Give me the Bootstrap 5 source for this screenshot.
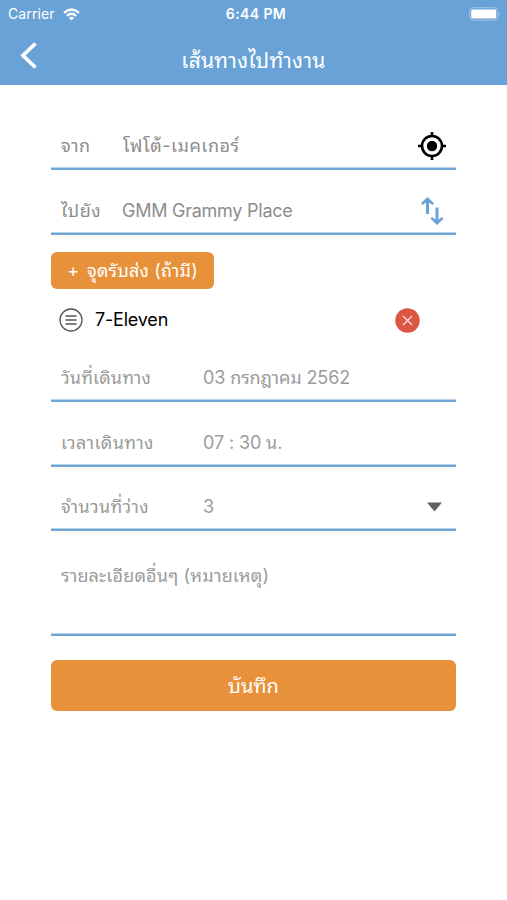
<!DOCTYPE html>
<html lang="th">
<head>
<meta charset="utf-8">
<meta name="viewport" content="width=device-width, initial-scale=1">
<title>เส้นทางไปทำงาน</title>
<link href="https://cdn.jsdelivr.net/npm/bootstrap@5.3.0/dist/css/bootstrap.min.css" rel="stylesheet">
<style>
body{font-family:Inter,"Noto Sans Thai Looped",Loma,Garuda,Umpush,Waree,"Droid Sans Thai",FreeSans,"Noto Serif Thai","Noto Sans","Liberation Sans",sans-serif;color:#000;background:#fff;font-size:18px;line-height:1}
svg{display:block;flex:none}
.app-head{background:#69a2d6;height:85px;color:#fff}
.status{height:28px;font-size:14px;padding:0 6px 0 8px}
.title-bar{height:57px;padding:0 20px 3px}
.title-bar h1{font-size:21px;line-height:1;padding-top:10px}
.form-area{width:405px;margin-left:51px;padding-top:20px}
.line-row{height:65px;border-bottom:2px solid #6fa6d6;box-shadow:inset 0 -1px #b9d3ea;padding:18px 10px 0;color:#8d8d8d}
.line-row.soft{color:#9b9b9b}
.line-row.date-row{height:51px;padding-top:4px}
.line-row.seat-row{height:64px}
.line-row.note-row{height:105px;padding-top:36px}
.w-place{width:62px}.w-label{width:142px}
.btn-orange{background:#e7913b;color:#fff;border:0;border-radius:6px}
.btn-orange:hover{background:#da842f;color:#fff}
.btn-stop{width:163px;height:37px;margin-top:17px;font-size:18px}
.stop-row{height:62px;padding:0 36px 0 8px}
.btn-save{height:51px;margin-top:24px;font-size:20px}
.t-carrier{letter-spacing:.1px}
.t-clock{letter-spacing:.4px;padding-left:3px}
.t-title{letter-spacing:.25px}
.t-seven{margin-left:12px;letter-spacing:-.2px}
.t-gmm{letter-spacing:-.25px;margin-left:-1px}
.t-from,.t-to,.t-photo{letter-spacing:.5px}
.t-dl{letter-spacing:.12px}
.t-dv,.t-tv{letter-spacing:-.12px}
.t-tl,.t-nl{letter-spacing:.35px}
.t-stop,.t-note{letter-spacing:.16px}
</style>
</head>
<body>
<header class="app-head">
  <div class="status row g-0 align-items-center">
    <div class="col d-flex align-items-center gap-2"><span class="t-carrier">Carrier</span>
      <svg width="17" height="13" viewBox="0 0 17 13" fill="none" stroke="#fff" stroke-width="2.2"><path d="M1 4.800Q8.500-1.800 16 4.800M3.800 7.800Q8.500 3.700 13.200 7.800"/><path d="M5.800 9.700Q8.500 7.700 11.200 9.700L8.500 12.500Z" fill="#fff" stroke="none"/></svg>
    </div>
    <div class="col-auto fw-semibold t-clock">6:44 PM</div>
    <div class="col d-flex justify-content-end">
      <svg width="32" height="14" viewBox="0 0 32 14"><rect x=".7" y=".7" width="28" height="12.600" rx="3.500" fill="none" stroke="#fff" stroke-opacity=".4"/><rect x="2.200" y="2.500" width="25" height="9" rx="1.500" fill="#fff"/><path d="M30 5q1.600 2 0 4z" fill="#fff" opacity=".6"/></svg>
    </div>
  </div>
  <div class="title-bar row g-0 align-items-center">
    <div class="col"><svg width="18" height="28" viewBox="0 0 18 28" fill="none" stroke="#fff" stroke-width="3.800"><path d="M15.500 2.500L3 14.500L15.500 26.500"/></svg></div>
    <h1 class="col-auto mb-0 fw-normal t-title">เส้นทางไปทำงาน</h1>
    <div class="col"></div>
  </div>
</header>
<main class="form-area">
  <div class="line-row d-flex align-items-center">
    <span class="w-place"><span class="t-from">จาก</span></span><span class="t-photo">โฟโต้-เมคเกอร์</span>
    <svg class="ms-auto" width="28" height="28" viewBox="0 0 28 28" fill="none" stroke="#000" stroke-width="2.600"><circle cx="14" cy="14" r="10"/><circle cx="14" cy="14" r="5.200" fill="#000" stroke="none"/><path d="M14 0v4M14 24v4M0 14h4M24 14h4"/></svg>
  </div>
  <div class="line-row d-flex align-items-center">
    <span class="w-place"><span class="t-to">ไปยัง</span></span><span class="t-gmm">GMM Grammy Place</span>
    <svg class="ms-auto" width="26" height="28" viewBox="0 0 26 28" fill="none" stroke="#69a2d6" stroke-width="3"><path d="M7.500 17V3M17 10.500v14"/><path d="M7.500 0L14 6.200L12.600 8L7.500 4.500L2.400 8L1 6.200ZM17 28L23.500 21.800L22.100 20L17 23.500L11.900 20L10.500 21.800Z" fill="#69a2d6" stroke="none"/></svg>
  </div>
  <button class="btn btn-orange btn-stop p-0 d-flex align-items-center justify-content-center" type="button"><span class="me-2">+</span><span class="t-stop">จุดรับส่ง (ถ้ามี)</span></button>
  <div class="stop-row d-flex align-items-center">
    <svg width="24" height="24" viewBox="0 0 24 24" fill="none" stroke="#555" stroke-width="1.300"><circle cx="12" cy="12" r="11"/><path d="M6.500 8h11M6.500 12h11M6.500 16h11"/></svg>
    <span class="t-seven">7-Eleven</span>
    <svg class="ms-auto" width="25" height="25" viewBox="0 0 25 25"><circle cx="12.500" cy="12.500" r="12.200" fill="#db5643"/><path d="M8 8l9 9M17 8l-9 9" stroke="#fbdcd7" stroke-width="1.400"/></svg>
  </div>
  <div class="line-row soft date-row d-flex align-items-center"><span class="w-label"><span class="t-dl">วันที่เดินทาง</span></span><span class="t-dv">03 กรกฎาคม 2562</span></div>
  <div class="line-row soft d-flex align-items-center"><span class="w-label"><span class="t-tl">เวลาเดินทาง</span></span><span class="t-tv">07 : 30 น.</span></div>
  <div class="line-row soft seat-row d-flex align-items-center"><span class="w-label"><span class="t-nl">จำนวนที่ว่าง</span></span><span>3</span>
    <svg class="ms-auto me-1" width="15" height="10" viewBox="0 0 15 10"><path d="M0 .500h15L7.500 9.500z" fill="#636363"/></svg>
  </div>
  <div class="line-row soft note-row"><span class="t-note">รายละเอียดอื่นๆ (หมายเหตุ)</span></div>
  <button class="btn btn-orange btn-save w-100 p-0" type="button"><span class="t-save">บันทึก</span></button>
</main>
<script src="https://cdn.jsdelivr.net/npm/bootstrap@5.3.0/dist/js/bootstrap.bundle.min.js"></script>
</body>
</html>
